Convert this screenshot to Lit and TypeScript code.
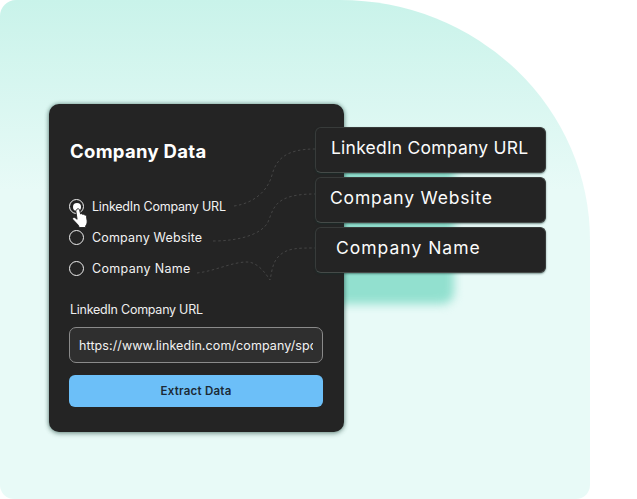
import { LitElement, html, css, svg } from "lit";
import { customElement } from "lit/decorators.js";

const OPTIONS = ["LinkedIn Company URL", "Company Website", "Company Name"];
const CONNECTORS = [
  "M234 206C255 203 268 190 272 175C276 160 285 149 315 149",
  "M213 241C240 241 262 234 268 222C274 208 274 194 315 194",
  "M197 273C215 271 232 262 247 262C258 262 266 274 270 280C272 272 272 262 280 255C288 248 298 248 315 248",
];

@customElement("app-root")
export class AppRoot extends LitElement {
  static styles = css`
    :host { display: block; width: 637px; height: 499px; background: #fff; overflow: hidden;
      font-family: Inter, "Liberation Sans", sans-serif; }
    .stage { position: relative; box-sizing: border-box; width: 590px; height: 499px;
      padding: 104px 0 0 49px; border-radius: 16px 250px 14px 14px / 16px 240px 14px 14px;
      background: linear-gradient(180deg, #c9f3ea 0, #e8faf7 190px); }
    .glow { position: absolute; left: 300px; top: 150px; width: 154px; height: 154px;
      background: #92e0cf; border-radius: 12px; filter: blur(5px); }
    .card { position: relative; box-sizing: border-box; width: 295px; height: 328px; padding: 34px 21px 0 20px;
      background: #242424; border-radius: 10px; color: #fff;
      box-shadow: 0 0 4px rgba(30,70,60,.55), 0 2px 5px rgba(30,70,60,.3); }
    h2 { margin: 0 0 27px 1px; font-size: 18.5px; line-height: 26px; font-weight: 700; letter-spacing: .3px; }
    .row { display: flex; align-items: center; gap: 8px; height: 31px; font-size: 12.5px; letter-spacing: .18px; color: #f2f2f2; }
    .row.first { letter-spacing: -.2px; }
    .row.last { letter-spacing: .32px; }
    .radio { box-sizing: border-box; width: 15px; height: 15px; border: 1.5px solid #eee; border-radius: 50%;
      display: grid; place-items: center; }
    .radio.on::after { content: ""; width: 8px; height: 8px; border-radius: 50%; background: #fff; }
    label { display: block; margin: 17px 0 0 1px; font-size: 12.5px; line-height: 18px; letter-spacing: -.25px; color: #eee; }
    input { display: block; box-sizing: border-box; width: 254px; height: 36px; margin-top: 8px; padding: 0 9px;
      background: #2f2f2f; border: 1px solid #8a8a8a; border-radius: 7px; color: #f2f2f2;
      font: 12.5px Inter, "Liberation Sans", sans-serif; letter-spacing: .1px; outline: none; }
    button { display: block; width: 254px; height: 32px; margin-top: 12px; padding: 0; border: 0; border-radius: 6px;
      background: #6cbff8; color: #1b2a36; font: 600 11.5px Inter, "Liberation Sans", sans-serif; letter-spacing: .25px; }
    .hand { position: absolute; left: 22px; top: 103px; width: 18px; height: 22px; }
    .lines { position: absolute; left: 0; top: 0; width: 590px; height: 499px; pointer-events: none; }
    .lines path { fill: none; stroke: #484848; stroke-width: .9; stroke-dasharray: 2.5 2.5; }
    .chips { position: absolute; left: 315px; top: 127px; display: flex; flex-direction: column; gap: 4px; }
    .chip { box-sizing: border-box; width: 231px; height: 46px; display: flex; align-items: center; padding: 0 15px 5px 15px;
      background: #242424; border: 1px solid #383b3a; border-bottom-color: #454a48; border-radius: 6px; color: #fbfbfb;
      font-size: 17.5px; font-weight: 400; letter-spacing: .22px; box-shadow: 0 1px 2px rgba(20,50,45,.5); white-space: nowrap; }
    .chip:nth-child(2) { padding-left: 14px; letter-spacing: .8px; }
    .chip:nth-child(3) { padding-left: 20px; letter-spacing: 1px; }
  `;

  render() {
    return html`<div class="stage">
      <div class="glow"></div>
      <div class="card">
        <h2>Company Data</h2>
        ${OPTIONS.map((o, i) => html`<div class="row ${i === 0 ? "first" : i === 2 ? "last" : ""}"><span class="radio ${i === 0 ? "on" : ""}"></span>${o}</div>`)}
        <label>LinkedIn Company URL</label>
        <input readonly value="https://www.linkedin.com/company/spotify" />
        <button>Extract Data</button>
        <svg class="hand" viewBox="0 0 18 22">
          <path d="M6 2.2c1-.9 2.3-.4 2.6.8l1 4c.9-.6 1.8-.3 2.1.4.8-.4 1.7-.1 2 .7.9-.2 1.6.4 1.8 1.3l.6 4.4c.2 1.9-.2 3.3-1.2 4.6l-.5 2.1H8.2l-.8-2.2L2 12.6c-.8-1-.3-2 .7-2.1.9-.1 2 .5 3.4 1.8L4.9 4.4c-.1-.9.4-1.7 1.1-2.2z"
            fill="#fff" stroke="#222" stroke-width=".9" />
        </svg>
      </div>
      <svg class="lines" viewBox="0 0 590 499">${CONNECTORS.map((d) => svg`<path d=${d}></path>`)}</svg>
      <div class="chips">${OPTIONS.map((o) => html`<div class="chip">${o}</div>`)}</div>
    </div>`;
  }
}
